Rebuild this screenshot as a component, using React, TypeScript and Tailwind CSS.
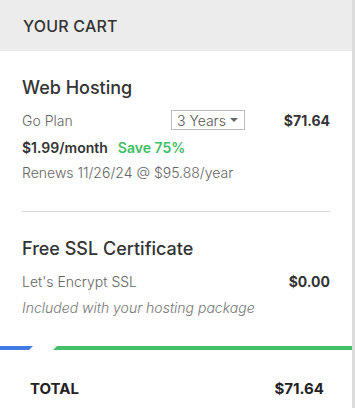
import React from "react";

const font = { fontFamily: "Inter, 'Noto Sans', sans-serif" };

const App = () => {
  return (
    <div className="w-[355px] h-[408px] bg-white flex" style={font}>
      <div className="w-[352px] flex flex-col">
        <div className="h-[51px] bg-[#ececec] flex items-center px-[23px]">
          <div className="text-[16px] font-medium text-[#333] tracking-[0.2px]">YOUR CART</div>
        </div>
        <div className="px-[22px] pt-[26px]">
          <div className="text-[18px] font-medium text-[#333] leading-[22px]">Web Hosting</div>
          <div className="flex items-center mt-[11px] h-[20px]">
            <div className="text-[14px] font-light text-[#666] w-[149px]">Go Plan</div>
            <div className="w-[74px] h-[20px] border border-[#bbb] flex items-center justify-between pl-[5px] pr-[6px] text-[14px] font-light text-[#555]">
              <span>3 Years</span>
              <span className="w-0 h-0 border-l-[4px] border-r-[4px] border-t-[4px] border-l-transparent border-r-transparent border-t-[#666]"></span>
            </div>
            <div className="ml-auto text-[14px] font-bold text-[#333]">$71.64</div>
          </div>
          <div className="flex items-center gap-[10px] mt-[7px] text-[14px] font-semibold">
            <span className="text-[#333]">$1.99/month</span>
            <span className="text-[#3ebf67]">Save 75%</span>
          </div>
          <div className="mt-[4px] text-[14px] font-light text-[#666]">Renews 11/26/24 @ $95.88/year</div>
          <div className="h-px bg-[#d6d6d6] mt-[28px]"></div>
          <div className="text-[18px] font-medium text-[#333] leading-[22px] mt-[26px]">Free SSL Certificate</div>
          <div className="flex items-center mt-[11px] text-[14px]">
            <span className="font-light text-[#666]">Let's Encrypt SSL</span>
            <span className="ml-auto font-bold text-[#333]">$0.00</span>
          </div>
          <div className="mt-[5px] text-[14px] font-light italic text-[#777]">Included with your hosting package</div>
        </div>
        <div className="flex mt-[28px] h-[4px]">
          <div className="w-[33px] bg-[#3f7be0] [clip-path:polygon(0_0,100%_0,calc(100%-4px)_100%,0_100%)]"></div>
          <div className="ml-[20px] flex-1 bg-[#45c06a] [clip-path:polygon(4px_0,100%_0,100%_100%,0_100%)]"></div>
        </div>
        <div className="flex items-center px-[30px] pr-[28px] mt-[28px] text-[15px] font-bold text-[#222]">
          <span>TOTAL</span>
          <span className="ml-auto">$71.64</span>
        </div>
      </div>
      <div className="w-[3px] bg-[#dcdcdc]"></div>
    </div>
  );
};

export default App;
